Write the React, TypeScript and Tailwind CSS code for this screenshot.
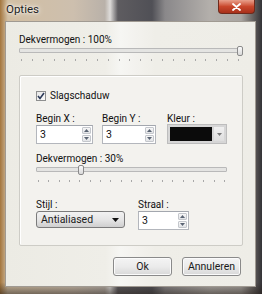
import React from "react";

const font = { fontFamily: 'Roboto, "Noto Sans", sans-serif' };

const Ticks = ({ count, gap }: { count: number; gap: number }) => (
  <div className="flex justify-between px-[2px]" style={{ marginTop: gap }}>
    {Array.from({ length: count }).map((_, i) => (
      <span key={i} className="h-[2px] w-px bg-[#a8a8a8]" />
    ))}
  </div>
);

const Slider = ({
  width,
  thumb,
  ticks,
  gap,
}: {
  width: number;
  thumb: number;
  ticks: number;
  gap: number;
}) => (
  <div style={{ width }}>
    <div className="relative h-[5px] rounded-[1px] border border-[#b9b9b9] bg-[#e4e4e2]">
      <div
        className="absolute top-[-3px] h-[10px] w-[6px] rounded-[2px] border border-[#8a8a8a] bg-gradient-to-b from-[#fbfbfb] to-[#d9d9d9]"
        style={{ left: thumb }}
      />
    </div>
    <Ticks count={ticks} gap={gap} />
  </div>
);

const Spinner = () => (
  <div className="my-[1px] mr-[1px] flex w-[9px] flex-col gap-px">
    <div className="flex flex-1 items-center justify-center rounded-[1px] border border-[#c4c7cc] bg-gradient-to-b from-[#f7f7f7] to-[#e2e4e7]">
      <svg width="5" height="3" viewBox="0 0 5 3">
        <path d="M0 3 L2.5 0 L5 3 Z" fill="#5a6473" />
      </svg>
    </div>
    <div className="flex flex-1 items-center justify-center rounded-[1px] border border-[#c4c7cc] bg-gradient-to-b from-[#f7f7f7] to-[#e2e4e7]">
      <svg width="5" height="3" viewBox="0 0 5 3">
        <path d="M0 0 L2.5 3 L5 0 Z" fill="#5a6473" />
      </svg>
    </div>
  </div>
);

const SpinBox = ({ width }: { width: number }) => (
  <div
    className="flex h-[19px] border border-[#b3b6bc] border-t-[#a3a7ae] bg-white"
    style={{ width }}
  >
    <span className="flex-1 pl-[3px] text-[10.5px] leading-[17px] text-[#111]">3</span>
    <Spinner />
  </div>
);

const Label = ({ children }: { children: React.ReactNode }) => (
  <div className="text-[10px] leading-[13px] text-[#111]">{children}</div>
);

export default function App() {
  return (
    <div
      className="flex h-[294px] w-[262px] flex-col overflow-hidden bg-[linear-gradient(180deg,transparent_96%,rgba(40,32,26,0.55)_100%),linear-gradient(90deg,#a4763e_0%,#d2bfa3_3%,#cdbfae_28%,#b9b1a9_40%,#dedcda_42%,#5e5c60_45%,#505056_58%,#8a888a_63%,#b3afab_80%,#a9a5a1_92%,#6e6a68_96%,#333236_100%)] text-[#1a1a1a]"
      style={font}
    >
      {/* title bar */}
      <div className="flex h-[21px] shrink-0 items-start justify-between">
        <span className="pl-[6px] pt-[3px] text-[11.5px] leading-[13px] text-[#1e1e1e] [text-shadow:0_0_6px_#fff,0_0_3px_#fff]">
          Opties
        </span>
        <div className="mr-[7px] flex h-[14px] w-[37px] items-center justify-center rounded-b-[4px] border border-t-0 border-[#6e2a1c] bg-gradient-to-b from-[#e8a08c] via-[#c9472c] to-[#a8301a]">
          <svg width="9" height="8" viewBox="0 0 9 8">
            <path
              d="M1 1 L8 7 M8 1 L1 7"
              stroke="#fff"
              strokeWidth="1.8"
              strokeLinecap="round"
            />
          </svg>
        </div>
      </div>

      {/* client area */}
      <div className="mb-[7px] ml-[5px] mr-[6px] flex flex-1 flex-col border border-[#a09a92] bg-[linear-gradient(90deg,#ecebe4_0%,#efeee8_40%,#f6f6f3_46%,#f3f2ee_52%,#efeee8_60%,#eeede7_100%)] px-[13px] pt-[11px]">
        <Label>Dekvermogen : 100%</Label>
        <div className="mt-[2px]">
          <Slider width={222} thumb={217} ticks={21} gap={6} />
        </div>

        {/* group box */}
        <div className="mt-[14px] flex h-[171px] w-[224px] flex-col rounded-[2px] border border-[#cdccc6] bg-[#f3f2ee] pl-[16px] pt-[13px] shadow-[inset_1px_1px_0_#fff]">
          <div className="flex h-[13px] items-center gap-[4px]">
            <div className="flex h-[10px] w-[10px] items-center justify-center border border-[#8e8f8f] bg-gradient-to-br from-[#e8e8e8] to-[#fafafa]">
              <svg width="8" height="8" viewBox="0 0 8 8">
                <path d="M1 4 L3 6.5 L7 1" stroke="#2c3a58" strokeWidth="1.6" fill="none" />
              </svg>
            </div>
            <Label>Slagschaduw</Label>
          </div>

          <div className="mt-[10px] flex">
            <div className="w-[66px]">
              <Label>Begin X :</Label>
              <SpinBox width={57} />
            </div>
            <div className="w-[65px]">
              <Label>Begin Y :</Label>
              <SpinBox width={54} />
            </div>
            <div>
              <Label>Kleur :</Label>
              <div className="mt-[-1px] flex h-[20px] w-[60px] items-center border border-[#bdbdbd] bg-[#d6d6d6] p-[2px]">
                <div className="h-full flex-1 bg-[#0b0b0b]" />
                <div className="ml-[2px] flex h-full w-[10px] items-center justify-center bg-gradient-to-b from-[#f0f0f0] to-[#dedede]">
                  <svg width="5" height="3" viewBox="0 0 5 3">
                    <path d="M0 0 L2.5 3 L5 0 Z" fill="#7a7a7a" />
                  </svg>
                </div>
              </div>
            </div>
          </div>

          <div className="mt-[8px]">
            <Label>Dekvermogen : 30%</Label>
          </div>
          <div className="mt-[2px]">
            <Slider width={191} thumb={41} ticks={19} gap={8} />
          </div>

          <div className="mt-[16px] flex">
            <div className="w-[102px]">
              <Label>Stijl :</Label>
              <div className="flex h-[17px] w-[89px] items-center justify-between rounded-[3px] border border-[#7b7b7b] bg-gradient-to-b from-[#f2f2f2] via-[#e6e6e6] to-[#cfcfcf] pl-[4px] pr-[5px]">
                <span className="text-[10.5px] leading-[13px]">Antialiased</span>
                <svg width="7" height="4" viewBox="0 0 7 4">
                  <path d="M0 0 L3.5 4 L7 0 Z" fill="#111" />
                </svg>
              </div>
            </div>
            <div>
              <Label>Straal :</Label>
              <SpinBox width={51} />
            </div>
          </div>
        </div>

        {/* buttons */}
        <div className="mt-[11px] flex justify-end gap-[10px] pr-[1px]">
          <button className="h-[19px] w-[59px] rounded-[3px] border border-[#8a8a8a] bg-gradient-to-b from-[#f4f4f4] via-[#ebebeb] to-[#d8d8d8] text-[10.5px] leading-[13px] shadow-[inset_0_0_0_1px_#fbfbfb]">
            Ok
          </button>
          <button className="h-[19px] w-[59px] rounded-[3px] border border-[#8a8a8a] bg-gradient-to-b from-[#f4f4f4] via-[#ebebeb] to-[#d8d8d8] text-[10.5px] leading-[13px] shadow-[inset_0_0_0_1px_#fbfbfb]">
            Annuleren
          </button>
        </div>
      </div>
    </div>
  );
}
